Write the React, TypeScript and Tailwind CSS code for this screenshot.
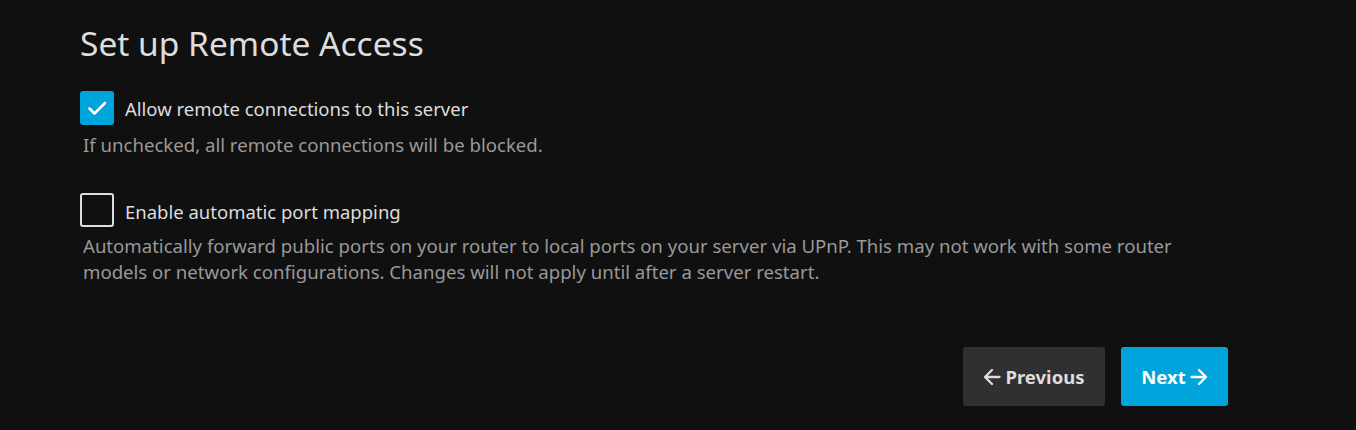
import React from "react";

function Check() {
  return (
    <svg width="24" height="24" viewBox="0 0 24 24" fill="none" stroke="white" strokeWidth="2.6" strokeLinecap="round" strokeLinejoin="round">
      <path d="M4.5 12.5l5 5L20 7" />
    </svg>
  );
}

function ArrowL() {
  return (
    <svg width="18" height="18" viewBox="0 0 18 18" fill="none" stroke="currentColor" strokeWidth="2.3" strokeLinecap="round" strokeLinejoin="round">
      <path d="M16.5 9H2M9 2L2 9l7 7" />
    </svg>
  );
}

function ArrowR() {
  return (
    <svg width="18" height="18" viewBox="0 0 18 18" fill="none" stroke="currentColor" strokeWidth="2.3" strokeLinecap="round" strokeLinejoin="round">
      <path d="M1.5 9H16M9 2l7 7-7 7" />
    </svg>
  );
}

export default function App() {
  return (
    <div
      className="w-[1356px] h-[430px] bg-[#101010] text-[#dddddd] overflow-hidden"
      style={{ fontFamily: '"Noto Sans", sans-serif' }}
    >
      <div className="pl-[80px] pt-[21px] w-[1228px]">
        <h1 className="text-[33.5px] leading-[44px] font-normal text-[#dddddd] m-0">Set up Remote Access</h1>

        <div className="mt-[26px] flex items-center gap-[11px]">
          <div className="w-[34px] h-[34px] rounded-[3px] bg-[#00a4dc] flex items-center justify-center">
            <Check />
          </div>
          <span className="text-[18.5px] leading-[24px] mt-[1px]">Allow remote connections to this server</span>
        </div>
        <div className="mt-[7px] pl-[3px] text-[18.6px] leading-[26px] text-[#999999]">
          If unchecked, all remote connections will be blocked.
        </div>

        <div className="mt-[35px] flex items-center gap-[11px]">
          <div className="w-[34px] h-[34px] rounded-[3px] border-2 border-[#dddddd] box-border" />
          <span className="text-[18.5px] leading-[24px] mt-[3px]">Enable automatic port mapping</span>
        </div>
        <div className="mt-[6px] pl-[3px] w-[1125px] text-[18.6px] leading-[26px] text-[#999999]">
          Automatically forward public ports on your router to local ports on your server via UPnP. This may not work with some router models or network configurations. Changes will not apply until after a server restart.
        </div>

        <div className="mt-[62px] flex justify-end gap-[16px]">
          <button className="h-[59px] w-[142px] rounded-[3px] bg-[#303030] text-[#dddddd] flex items-center justify-center gap-[4px] text-[18.5px] font-bold">
            <ArrowL />
            <span>Previous</span>
          </button>
          <button className="h-[59px] w-[107px] rounded-[3px] bg-[#00a4dc] text-white flex items-center justify-center gap-[4px] text-[18.5px] font-bold">
            <span>Next</span>
            <ArrowR />
          </button>
        </div>
      </div>
    </div>
  );
}
